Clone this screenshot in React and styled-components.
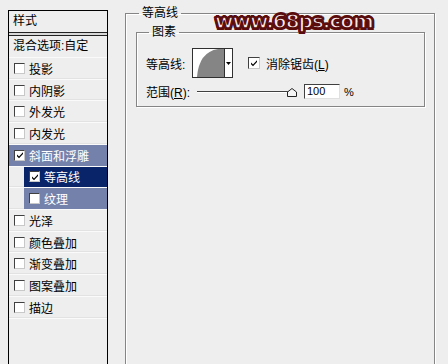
import React from 'react';
import styled, { createGlobalStyle } from 'styled-components';

const GlobalStyle = createGlobalStyle`
  html, body {
    margin: 0;
    padding: 0;
    background: #eeeeee;
    overflow: hidden;
  }
  body {
    font-family: "Liberation Sans", "Noto Sans CJK SC", sans-serif;
    font-size: 12px;
    color: #000;
  }
`;

const styleItems = [
  { label: '投影' },
  { label: '内阴影' },
  { label: '外发光' },
  { label: '内发光' },
  { label: '斜面和浮雕', checked: true, mode: 'parent' },
  { label: '等高线', checked: true, mode: 'active', sub: true },
  { label: '纹理', mode: 'parent', sub: true },
  { label: '光泽' },
  { label: '颜色叠加' },
  { label: '渐变叠加' },
  { label: '图案叠加' },
  { label: '描边' },
];

export default function App() {
  return (
    <>
      <GlobalStyle />
      <Page>
        <StyleList>
          <ListHeader>样式</ListHeader>
          <BlendRow>混合选项:自定</BlendRow>
          {styleItems.map((item) => (
            <ListRow key={item.label} $sub={item.sub}>
              <RowBand $mode={item.mode}>
                <Check $checked={item.checked}>
                  {item.checked && <Tick />}
                </Check>
                {item.label}
              </RowBand>
            </ListRow>
          ))}
        </StyleList>

        <Settings>
          <Group>
            <Legend>等高线</Legend>
            <InnerGroup>
              <InnerLegend>图素</InnerLegend>
              <ContourRow>
                <Label>等高线:</Label>
                <ContourPicker>
                  <ContourPreview>
                    <svg width="31" height="28" viewBox="0 0 31 28">
                      <path d="M4 28 Q6 3 25 0 L31 0 L31 28 Z" fill="#858585" />
                    </svg>
                  </ContourPreview>
                  <DropArrow>
                    <svg width="5" height="3" viewBox="0 0 5 3">
                      <path d="M0 0 H5 L2.5 3 Z" fill="#000" />
                    </svg>
                  </DropArrow>
                </ContourPicker>
                <CheckLabel>
                  <BigCheck>
                    <Tick />
                  </BigCheck>
                  <span>消除锯齿(<U>L</U>)</span>
                </CheckLabel>
              </ContourRow>
              <RangeRow>
                <Label>范围(<U>R</U>):</Label>
                <Slider>
                  <Track />
                  <Thumb>
                    <svg width="10" height="9" viewBox="0 0 10 9">
                      <path d="M0.5 8.5 V4 L5 0.5 L9.5 4 V8.5 Z" fill="#f4f4f4" stroke="#222" />
                    </svg>
                  </Thumb>
                </Slider>
                <NumberBox>100</NumberBox>
                <Unit>%</Unit>
              </RangeRow>
            </InnerGroup>
          </Group>
        </Settings>

        <Watermark>www.68ps.com</Watermark>
      </Page>
    </>
  );
}

function Tick() {
  return (
    <svg width="8" height="8" viewBox="0 0 8 8">
      <path d="M1 3.5 L3 5.5 L7 1.2 V3 L3 7.2 L1 5.2 Z" fill="#000" />
    </svg>
  );
}

//styled

const Page = styled.div`
  position: relative;
  display: flex;
  align-items: flex-start;
  width: 448px;
  height: 364px;
  padding: 6px 0 0 8px;
  box-sizing: border-box;
`;

const StyleList = styled.div`
  width: 100px;
  height: 380px;
  margin-top: 4px;
  box-sizing: border-box;
  border: 1px solid #000;
  border-bottom: none;
  background: #eeeeee;
  flex-shrink: 0;
`;

const ListHeader = styled.div`
  height: 21px;
  line-height: 21px;
  padding-left: 4px;
  border-bottom: 1px solid #222;
  box-shadow: 0 2px 0 #d8d8d8, 0 3px 0 #222;
  margin-bottom: 3px;
`;

const BlendRow = styled.div`
  height: 21px;
  line-height: 21px;
  padding-left: 4px;
  border-bottom: 1px solid #fafafa;
`;

const ListRow = styled.div`
  height: 21.73px;
  box-sizing: border-box;
  padding-left: ${(p) => (p.$sub ? '15px' : '0')};
  border-bottom: 1px solid #fafafa;
  box-shadow: 0 -1px 0 #e2e2e2 inset;
`;

const bandColors = {
  parent: '#7482ab',
  active: '#0a246a',
};

const RowBand = styled.div`
  display: flex;
  align-items: center;
  gap: 4px;
  height: 100%;
  padding-left: 5px;
  background: ${(p) => bandColors[p.$mode] || 'transparent'};
  color: ${(p) => (p.$mode ? '#fff' : '#000')};
`;

const Check = styled.span`
  display: inline-flex;
  align-items: center;
  justify-content: center;
  width: 9px;
  height: 9px;
  background: #fff;
  border-top: 1px solid #404040;
  border-left: 1px solid #404040;
  border-bottom: 1px solid #c8c8c8;
  border-right: 1px solid #c8c8c8;
  flex-shrink: 0;
`;

const Settings = styled.div`
  margin-left: 17px;
  flex-shrink: 0;
`;

const Group = styled.fieldset`
  width: 310px;
  height: 400px;
  margin: 0;
  padding: 0;
  box-sizing: border-box;
  border: 1px solid #858585;
  box-shadow: 1px 1px 0 #fff, inset 1px 1px 0 #fff;
`;

const Legend = styled.legend`
  margin-left: 13px;
  padding: 0 3px;
  line-height: 14px;
`;

const InnerGroup = styled.fieldset`
  margin: 5px 9px 0 10px;
  padding: 0 0 7px 9px;
  border: 1px solid #858585;
  box-shadow: 1px 1px 0 #fff, inset 1px 1px 0 #fff;
`;

const InnerLegend = styled.legend`
  margin-left: 3px;
  padding: 0 3px;
  line-height: 14px;
`;

const ContourRow = styled.div`
  display: flex;
  align-items: center;
  margin-top: 9px;
  height: 30px;
`;

const Label = styled.span`
  display: inline-block;
  width: 46px;
  white-space: nowrap;
`;

const U = styled.span`
  text-decoration: underline;
`;

const ContourPicker = styled.div`
  display: flex;
  width: 41px;
  height: 30px;
  box-sizing: border-box;
  border: 1px solid #303030;
  background: #fff;
`;

const ContourPreview = styled.div`
  width: 31px;
  height: 28px;
  border-right: 1px solid #303030;
  overflow: hidden;
  svg {
    display: block;
  }
`;

const DropArrow = styled.div`
  flex: 1;
  display: flex;
  align-items: center;
  justify-content: center;
  svg {
    display: block;
  }
`;

const CheckLabel = styled.label`
  display: flex;
  align-items: center;
  gap: 6px;
  margin-left: 15px;
`;

const BigCheck = styled(Check)`
  width: 10px;
  height: 10px;
`;

const RangeRow = styled.div`
  display: flex;
  align-items: center;
  margin-top: 6px;
  height: 15px;
`;

const Slider = styled.div`
  position: relative;
  width: 102px;
  height: 15px;
  margin-left: 5px;
`;

const Track = styled.div`
  position: absolute;
  left: 0;
  right: 4px;
  top: 7px;
  height: 2px;
  border-top: 1px solid #404040;
  border-bottom: 1px solid #fff;
  background: #d0d0d0;
  box-sizing: border-box;
`;

const Thumb = styled.div`
  position: absolute;
  left: 90px;
  top: 4px;
  svg {
    display: block;
  }
`;

const NumberBox = styled.div`
  width: 36px;
  height: 15px;
  box-sizing: border-box;
  margin-left: 5px;
  padding-left: 2px;
  line-height: 13px;
  font-size: 11px;
  background: #fff;
  border-top: 1px solid #404040;
  border-left: 1px solid #404040;
  border-bottom: 1px solid #e0e0e0;
  border-right: 1px solid #e0e0e0;
`;

const Unit = styled.span`
  margin-left: 4px;
  font-size: 11px;
`;

const Watermark = styled.div`
  position: absolute;
  left: 215px;
  top: 9px;
  font-family: "DejaVu Sans", sans-serif;
  font-weight: bold;
  font-size: 20px;
  letter-spacing: -1px;
  color: #fbeaea;
  -webkit-text-stroke: 1.5px #5a0c0c;
  text-shadow:
    2px 0 0 #5a0c0c, -2px 0 0 #5a0c0c, 0 2px 0 #5a0c0c, 0 -2px 0 #5a0c0c,
    1.5px 1.5px 0 #5a0c0c, -1.5px -1.5px 0 #5a0c0c, 1.5px -1.5px 0 #5a0c0c, -1.5px 1.5px 0 #5a0c0c;
  pointer-events: none;
`;
